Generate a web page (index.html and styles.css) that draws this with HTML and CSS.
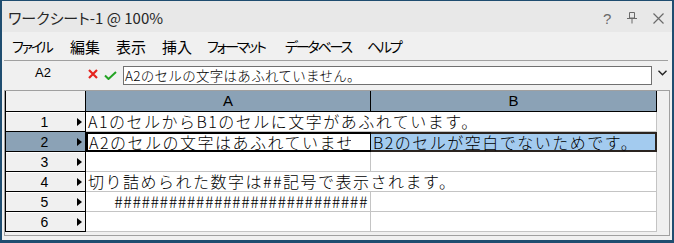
FILE: index.html
```html
<!DOCTYPE html>
<html lang="ja">
<head>
<meta charset="utf-8">
<title>ワークシート-1</title>
<link rel="stylesheet" href="styles.css">
</head>
<body>
<div class="window">
  <div class="titlebar">
    <span class="title">ワークシート-1 @ 100%</span>
    <div class="controls">
      <span class="help">?</span>
      <svg class="pin" width="10" height="12" viewBox="0 0 10 12"><path d="M2.5 0.5h5v5.5h-5z M0 6.5h10 M5 6.5v5" fill="none" stroke="#6a6a6a" stroke-width="1"/></svg>
      <svg class="close" width="11" height="11" viewBox="0 0 11 11"><path d="M0.5 0.5L10.5 10.5M10.5 0.5L0.5 10.5" stroke="#6a6a6a" stroke-width="1.2"/></svg>
    </div>
  </div>
  <div class="menubar">
    <span class="kana">ファイル</span><span>編集</span><span>表示</span><span>挿入</span><span class="kana">フォーマット</span><span class="kana">データベース</span><span class="kana">ヘルプ</span>
  </div>
  <div class="sep"></div>
  <div class="formulabar">
    <span class="cellref">A2</span>
    <svg class="cancel" width="10" height="10" viewBox="0 0 10 10"><path d="M1 1L9 9M9 1L1 9" stroke="#e5231d" stroke-width="2.2"/></svg>
    <svg class="accept" width="13" height="9" viewBox="0 0 13 9"><path d="M1 4.5L4.5 8L12 1" fill="none" stroke="#23a323" stroke-width="2"/></svg>
    <div class="input">A2のセルの文字はあふれていません。</div>
    <svg class="chevron" width="9" height="6" viewBox="0 0 9 6"><path d="M0.5 0.8L4.5 4.8L8.5 0.8" fill="none" stroke="#222" stroke-width="1.4"/></svg>
  </div>
  <div class="gridwrap">
    <div class="grid">
      <div class="corner"></div>
      <div class="colhead">A</div>
      <div class="colhead">B</div>

      <div class="rowhead"><span class="num">1</span><span class="tri"></span></div>
      <div class="cell span2">A1のセルからB1のセルに文字があふれています。</div>

      <div class="rowhead selected"><span class="num">2</span><span class="tri"></span></div>
      <div class="cell sel-a"><span class="clip">A2のセルの文字はあふれていません。</span></div>
      <div class="cell sel-b">B2のセルが空白でないためです。</div>

      <div class="rowhead"><span class="num">3</span><span class="tri"></span></div>
      <div class="cell"></div>
      <div class="cell"></div>

      <div class="rowhead"><span class="num">4</span><span class="tri"></span></div>
      <div class="cell span2">切り詰められた数字は##記号で表示されます。</div>

      <div class="rowhead"><span class="num">5</span><span class="tri"></span></div>
      <div class="cell right"><span class="hash">############################</span></div>
      <div class="cell"></div>

      <div class="rowhead"><span class="num">6</span><span class="tri"></span></div>
      <div class="cell"></div>
      <div class="cell"></div>
    </div>
  </div>
</div>
</body>
</html>
```
FILE: styles.css
```css
html, body {
  margin: 0;
  padding: 0;
  background: #f0f0f0;
}

.window {
  width: 674px;
  height: 243px;
  box-sizing: border-box;
  border: 1px solid #1f4d70;
  border-left-width: 2px;
  border-right-width: 2px;
  border-bottom-width: 3px;
  background: #f0f0f0;
  display: flex;
  flex-direction: column;
  font-family: "Noto Sans CJK JP", "Noto Sans", sans-serif;
  overflow: hidden;
}

.titlebar {
  height: 31px;
  flex: none;
  background: #e8e8e8;
  display: flex;
  align-items: center;
  padding-left: 6px;
}

.title {
  font-size: 15px;
  color: #262626;
  font-feature-settings: "palt";
  line-height: 20px;
  margin-top: 3px;
}

.controls {
  margin-left: auto;
  display: flex;
  align-items: center;
  margin-right: 8px;
  margin-top: 3px;
}

.help {
  font-family: "Liberation Sans", sans-serif;
  font-size: 15px;
  color: #6a6a6a;
  width: 8px;
}

.pin {
  margin-left: 16px;
}

.close {
  margin-left: 16px;
}

.menubar {
  height: 28px;
  flex: none;
  display: grid;
  grid-template-columns: 58px 46px 46px 45px 78px 82px auto;
  align-items: center;
  padding-left: 10px;
  font-size: 15px;
  color: #000;
  white-space: nowrap;
}

.kana {
  font-size: 14px;
  letter-spacing: -2.2px;
  font-feature-settings: "palt";
}

.sep {
  height: 1px;
  flex: none;
  background: #a0a0a0;
  margin: 0 4px 0 2px;
}

.formulabar {
  height: 29px;
  flex: none;
  display: flex;
  align-items: flex-start;
}

.cellref {
  width: 82px;
  text-align: center;
  font-family: "Liberation Sans", sans-serif;
  font-size: 13px;
  line-height: 16px;
  margin-top: 4px;
  color: #000;
}

.cancel {
  margin-left: 4px;
  margin-top: 8px;
}

.accept {
  margin-left: 6px;
  margin-top: 10px;
}

.input {
  margin-left: 6px;
  margin-top: 5px;
  width: 529px;
  height: 19px;
  box-sizing: border-box;
  border: 1px solid #707070;
  background: #fff;
  font-size: 13.5px;
  line-height: 17px;
  padding-left: 1px;
  white-space: nowrap;
  font-weight: 300;
  letter-spacing: 0.3px;
}

.chevron {
  margin-left: 6px;
  margin-top: 9px;
}

.gridwrap {
  flex: none;
  margin: 0 2px 4px 2px;
  border: 1px solid #a0a0a0;
  padding-bottom: 3px;
  box-sizing: border-box;
  height: 146px;
}

.grid {
  display: grid;
  grid-template-columns: 81px 285px 286px;
  grid-template-rows: 21px repeat(6, 20px);
}

.corner {
  box-sizing: border-box;
  border-left: 1px solid #000;
  border-right: 1px solid #000;
  border-bottom: 1px solid #000;
  background: #f0f0f0;
}

.colhead {
  box-sizing: border-box;
  background: #8ba2b6;
  border-right: 1px solid #000;
  border-bottom: 1px solid #000;
  text-align: center;
  font-family: "Liberation Sans", sans-serif;
  font-size: 15px;
  line-height: 20px;
  color: #000;
}

.rowhead {
  box-sizing: border-box;
  border-left: 1px solid #000;
  border-right: 1px solid #000;
  border-bottom: 1px solid #000;
  background: #f0f0f0;
  box-shadow: inset 0 1px 0 #ffffff;
  display: flex;
  align-items: center;
}

.rowhead.selected {
  background: #8ba2b6;
  box-shadow: none;
}

.num {
  flex: 1;
  text-align: center;
  padding-left: 6px;
  font-family: "Liberation Sans", sans-serif;
  font-size: 14px;
  color: #000;
}

.tri {
  width: 0;
  height: 0;
  border-top: 4px solid transparent;
  border-bottom: 4px solid transparent;
  border-left: 5px solid #000;
  margin-right: 3px;
}

.cell {
  box-sizing: border-box;
  background: #fff;
  border-right: 1px solid #c4c4c4;
  border-bottom: 1px solid #c4c4c4;
  font-size: 16px;
  font-weight: 300;
  letter-spacing: 1.5px;
  line-height: 19px;
  padding-left: 2px;
  white-space: nowrap;
  color: #000;
}

.span2 {
  grid-column: span 2;
}

.right {
  text-align: right;
  padding-right: 2px;
}

.hash {
  letter-spacing: 0.5px;
}

.sel-a {
  border: 2px solid #000;
  border-right: 1px solid #000;
  padding-left: 1px;
  line-height: 16px;
}

.clip {
  display: block;
  width: 262px;
  overflow: hidden;
}

.sel-b {
  background: #a3cbef;
  border: 2px solid #2a2420;
  border-left: none;
  line-height: 16px;
}
```
